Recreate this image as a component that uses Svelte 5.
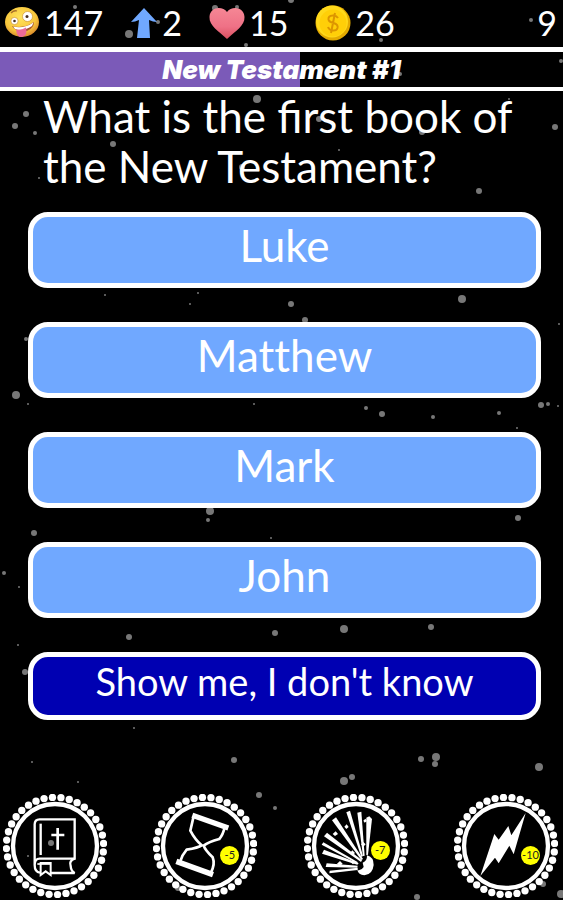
<script>
  const stars = [
    [75, 7, 2], [129, 34, 4], [158, 22, 2], [215, 8, 3], [237, 7, 2], [291, 0, 3], [246, 45, 2], [381, 40, 2],
    [531, 20, 2], [561, 61, 2], [400, 74, 2], [509, 99, 1], [257, 99, 4], [26, 114, 3], [15, 126, 3], [35, 133, 2],
    [113, 144, 3], [319, 119, 3], [422, 132, 3], [555, 127, 3], [339, 150, 1], [39, 178, 1], [242, 167, 3],
    [409, 169, 3], [479, 191, 3], [105, 295, 1], [190, 304, 1], [198, 293, 1], [291, 304, 3], [462, 299, 4],
    [305, 320, 3], [26, 339, 2], [559, 324, 1], [16, 395, 4], [28, 404, 1], [254, 404, 1], [366, 408, 2],
    [382, 414, 3], [433, 417, 2], [499, 413, 2], [541, 405, 3], [548, 404, 2], [558, 406, 1], [517, 428, 1],
    [210, 511, 4], [208, 520, 2], [518, 518, 3], [34, 533, 3], [271, 538, 1], [4, 573, 2], [19, 587, 1],
    [129, 637, 3], [275, 633, 3], [344, 629, 4], [431, 627, 3], [18, 645, 1], [25, 672, 3], [134, 728, 1],
    [234, 760, 3], [32, 762, 1], [78, 782, 1], [421, 759, 3], [436, 757, 4], [435, 764, 3], [539, 767, 4],
    [352, 777, 3], [344, 781, 4], [259, 795, 3], [275, 808, 2], [51, 843, 3], [28, 856, 1], [178, 888, 3],
    [543, 884, 3], [561, 894, 4], [417, 897, 3]
  ];
  const answers = ['Luke', 'Matthew', 'Mark', 'John'];
  const powers = [
    { id: 'bible', label: 'Open the Bible' },
    { id: 'time', label: 'More time', cost: '-5' },
    { id: 'bomb', label: 'Remove answers', cost: '-7' },
    { id: 'skip', label: 'Skip question', cost: '-10' }
  ];
  const dots = Array.from({ length: 36 }, (_, i) => {
    const a = ((i * 10 + 7) * Math.PI) / 180;
    return [156 + 146 * Math.sin(a), 156 - 146 * Math.cos(a)];
  });
  const progress = 53.3;
</script>

<main>
  <svg class="stars" viewBox="0 0 563 900" preserveAspectRatio="xMidYMin slice" aria-hidden="true">
    {#each stars as [x, y, r]}
      <circle cx={x} cy={y} {r} />
    {/each}
  </svg>

  <header>
    <span class="stat">
      <svg class="icon" viewBox="0 0 36 32" aria-hidden="true">
        <defs>
          <radialGradient id="face" cx="45%" cy="35%" r="65%">
            <stop offset="0" stop-color="#ffe45c" />
            <stop offset=".7" stop-color="#f8c63c" />
            <stop offset="1" stop-color="#d98a2c" />
          </radialGradient>
        </defs>
        <ellipse cx="18" cy="15" rx="17" ry="15" fill="url(#face)" />
        <circle cx="10.500" cy="14" r="3.600" fill="#fff" stroke="#c78a28" stroke-width=".6" />
        <circle cx="10.500" cy="14" r="1.300" fill="#4a3020" />
        <circle cx="23.500" cy="9.500" r="5" fill="#fff" stroke="#c78a28" stroke-width=".6" />
        <circle cx="23" cy="9.500" r="1.500" fill="#4a3020" />
        <path d="M7 6q3-3 6-2" stroke="#a8702a" stroke-width="1.300" fill="none" />
        <path d="M8 19Q20 22 30 15Q30 21 23 24Q12 26 8 19Z" fill="#a8552e" />
        <path d="M9 19.500Q20 22 29.500 15.500L28 19Q19 25 11 22Z" fill="#fff" />
        <path d="M12 22.500q5 1 10-2q2 8-4 9.500q-5 1-6-7.500Z" fill="#ec6a98" />
      </svg>
      147
    </span>
    <span class="stat">
      <svg class="arrow" viewBox="0 0 28 32" aria-hidden="true">
        <path d="M14 1L27 15Q23 15 19 13L20 31H7L9 13Q5 15 1 15Z" fill="#70a8ff" />
      </svg>
      2
    </span>
    <span class="stat">
      <svg class="icon" viewBox="0 0 36 32" aria-hidden="true">
        <defs>
          <linearGradient id="heart" x1="0" y1="0" x2="0" y2="1">
            <stop offset="0" stop-color="#f58795" />
            <stop offset=".6" stop-color="#ef7186" />
            <stop offset="1" stop-color="#d9505f" />
          </linearGradient>
        </defs>
        <path d="M18 5C22-1 35-1 35.500 10C36 19 26 24 18 32C10 24 0 19 .5 10C1-1 14-1 18 5Z" fill="url(#heart)" />
      </svg>
      15
    </span>
    <span class="stat">
      <svg class="icon" viewBox="0 0 36 36" aria-hidden="true">
        <circle cx="18" cy="18" r="17.500" fill="#e3aa00" />
        <circle cx="17" cy="16.500" r="16" fill="#ffd91a" />
        <circle cx="18" cy="18" r="13.500" fill="#ffcf08" />
        <path d="M23 13Q21 10 17.500 10.500Q13 11 13.500 14.500Q14 17 18.500 18Q23.500 19.500 22.500 23Q21.500 26 17.500 25.500Q14 25 13 22M20 8L16 28" fill="none" stroke="#dc9500" stroke-width="2" />
      </svg>
      26
    </span>
    <span class="timer">9</span>
  </header>

  <section class="level">
    <div class="fill" role="progressbar" aria-label="Level progress" aria-valuenow={progress} style="width: {progress}%"></div>
    <h1>New Testament #1</h1>
  </section>

  <h2>What is the first book of the New Testament?</h2>

  <div class="answers">
    {#each answers as answer}
      <button type="button" class="answer">{answer}</button>
    {/each}
    <button type="button" class="answer reveal">Show me, I don't know</button>
  </div>

  <footer>
    {#each powers as power}
      <button type="button" class="power" aria-label={power.label}>
        <svg viewBox="0 0 312 312" aria-hidden="true">
          {#each dots as [x, y]}
            <circle cx={x} cy={y} r="11" fill="#fff" />
          {/each}
          <circle cx="156" cy="156" r="126" fill="none" stroke="#fff" stroke-width="13" />
          {#if power.id === 'bible'}
            <g transform="translate(-10 -27)" fill="none" stroke="#fff" stroke-width="7">
              <path d="M105 240V118Q105 103 120 103H225V221H120Q105 221 105 240Q105 261 121 263" />
              <path d="M123 116V210" />
              <path d="M174 129V194M155 150H194" stroke-width="8" />
              <path d="M225 221Q207 228 213 243Q214 258 225 264H154" />
              <path d="M123 234V270L138 259L153 270V234Z" stroke-width="6" />
              <path d="M113 237H154" stroke-width="5" />
            </g>
          {:else if power.id === 'time'}
            <g transform="translate(-24 -27)" fill="none" stroke="#fff">
              <path d="M142 91L250 129" stroke-width="16" />
              <path d="M94 229L204 269" stroke-width="17" />
              <path d="M145 98L136 137Q150 164 170 181Q160 188 125 194Q111 210 105 231M239 127Q234 150 223 162Q190 171 176 182Q180 195 203 217Q211 238 198 262" stroke-width="8" />
            </g>
          {:else if power.id === 'bomb'}
            <g transform="translate(-30 -27)" fill="#fff">
              <path d="M157 82L168 77L207 213L202 216Z" />
              <path d="M190 83L202 80L212 212L207 213Z" />
              <path d="M217 98L226 94L234 102L222 209L217 211Z" />
              <path d="M114 106L126 97L207 222L202 225Z" />
              <path d="M90 154L99 143L204 226L201 231Z" />
              <path d="M83 179L88 172L192 232L188 235Z" />
              <path d="M84 206L90 194L194 235L190 239Z" />
              <path d="M95 246L98 235L191 242L190 248Z" />
              <path d="M106 265L107 257L191 248V255Z" />
              <path d="M116 147L125 139L132 147L123 153ZM151 125L158 118L164 126L157 132ZM208 107L214 101L219 108L212 113ZM201 178L208 171L215 178L208 185ZM168 204L175 196L183 204L176 211ZM129 236L138 228L146 236L138 243ZM170 232L176 226L183 232L177 238Z" />
              <path d="M219 211Q239 216 239 240Q236 269 211 271Q193 270 190 255Q202 258 209 246L206 233Q220 228 219 211Z" />
            </g>
          {:else}
            <path transform="translate(-28 -27)" d="M243 84L207 208L194 182L162 235L151 218L107 273L149 147L162 164L191 123L200 151Z" fill="#fff" />
          {/if}
        </svg>
        {#if power.cost}
          <span class="cost" class:high={power.id === 'bomb'}>{power.cost}</span>
        {/if}
      </button>
    {/each}
  </footer>
</main>

<style>
  :global(body) {
    margin: 0;
    background: #000;
  }
  main {
    position: relative;
    display: flex;
    flex-direction: column;
    box-sizing: border-box;
    min-height: 100vh;
    overflow: hidden;
    background: #000;
    color: #fff;
    font-family: Lato, "Noto Sans", sans-serif;
  }
  main > :not(.stars) {
    position: relative;
  }
  .stars {
    position: absolute;
    inset: 0;
    width: 100%;
    height: 100%;
    fill: #777;
  }
  header {
    display: flex;
    align-items: center;
    gap: 27px;
    height: 47px;
    padding: 0 6px 2px 4px;
    box-sizing: border-box;
    font-size: 34px;
    line-height: 44px;
  }
  .stat {
    display: flex;
    align-items: center;
    gap: 4px;
  }
  .icon {
    width: 36px;
    height: 36px;
  }
  .arrow {
    width: 28px;
    height: 32px;
  }
  .timer {
    margin-left: auto;
  }
  .level {
    display: flex;
    align-items: center;
    justify-content: center;
    height: 35px;
    border: solid #fff;
    border-width: 5px 0 4px;
  }
  .fill {
    position: absolute;
    inset: 0 auto 0 0;
    background: #7b5ab8;
  }
  h1 {
    position: relative;
    margin: 0;
    font: italic 900 26px/34px Inter, sans-serif;
  }
  h2 {
    margin: 0;
    padding: 0 24px 21px 43px;
    font-size: 44px;
    font-weight: 400;
    line-height: 50px;
  }
  .answers {
    display: flex;
    flex-direction: column;
    gap: 34px;
    padding: 0 22px 0 28px;
  }
  .answer {
    box-sizing: border-box;
    min-height: 76px;
    padding: 0 16px 10px;
    border: 5px solid #fff;
    border-radius: 20px;
    background: #70a8ff;
    color: #fff;
    font: 400 44px/50px Lato, "Noto Sans", sans-serif;
    font-variant-ligatures: none;
  }
  .reveal {
    min-height: 68px;
    background: #0000b2;
    font-size: 38px;
    line-height: 48px;
  }
  footer {
    display: flex;
    justify-content: space-between;
    margin-top: auto;
    padding: 0 5px 2px 3px;
  }
  .power {
    position: relative;
    width: 104px;
    height: 104px;
    padding: 0;
    border: 0;
    background: none;
  }
  .power svg {
    display: block;
    width: 100%;
    height: 100%;
  }
  .cost {
    position: absolute;
    top: 52px;
    left: 67px;
    width: 19px;
    height: 19px;
    border-radius: 50%;
    background: #ff0;
    color: #222;
    font: 11px/17px Lato, sans-serif;
    text-align: center;
  }
  .high {
    top: 47px;
  }
</style>
